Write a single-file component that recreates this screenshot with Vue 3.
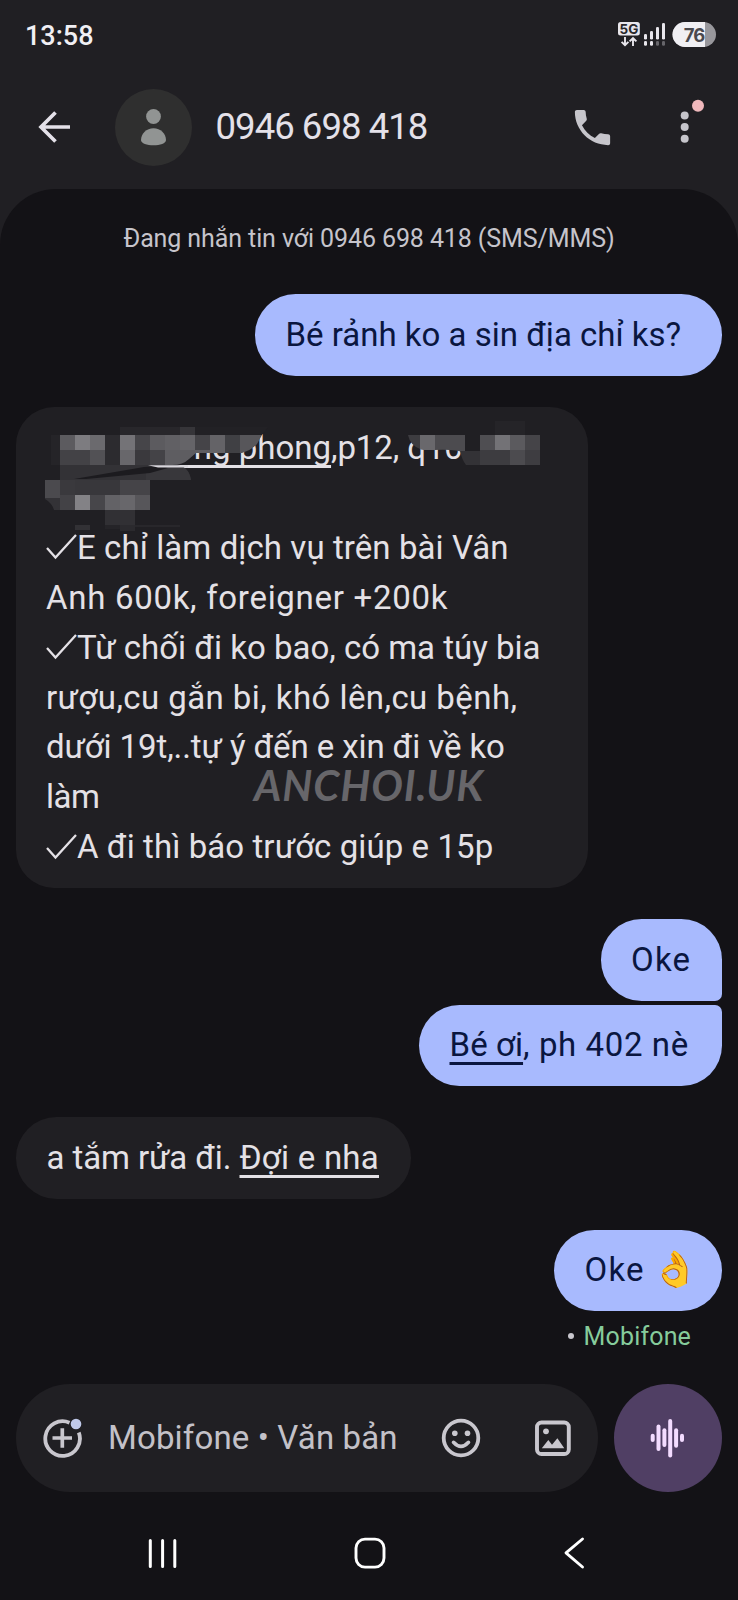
<script setup>
const lines = [
  { text: 'E chỉ làm dịch vụ trên bài Vân', check: true, cls: 'ls-1' },
  { text: 'Anh 600k, foreigner +200k', cls: 'ls-7' },
  { text: 'Từ chối đi ko bao, có ma túy bia', check: true, cls: 'ls-0' },
  { text: 'rượu,cu gắn bi, khó lên,cu bệnh,', cls: 'ls-4' },
  { text: 'dưới 19t,..tự ý đến e xin đi về ko', cls: 'ls-neg' },
  { text: 'làm', cls: 'ls-neg5' },
  { text: 'A đi thì báo trước giúp e 15p', check: true, cls: 'ls-1' },
]

// Pixelation tiles, relative to the bubble corner: x, y, width, height, colour.
const tilesTop = [
  [104, 20, 60, 8, '#28272b'], [164, 20, 15, 8, '#363539'], [179, 20, 73, 8, '#222125'], [35, 28, 9, 46, '#252428'],
  [44, 28, 15, 15, '#5c5b5f'], [59, 28, 15, 15, '#7d7c80'], [74, 28, 15, 15, '#6b6a6e'],
  [89, 28, 15, 30, '#2c2b2f'], [104, 28, 15, 15, '#747377'], [119, 28, 15, 15, '#464549'],
  [134, 28, 15, 15, '#5c5b5f'], [149, 28, 15, 15, '#616064'], [164, 28, 15, 15, '#656468'],
  [179, 28, 15, 18, '#454448'], [194, 28, 15, 18, '#646367'], [209, 28, 15, 18, '#404044'], [224, 28, 24, 18, '#57565a'],
  [44, 43, 30, 15, '#434246'], [74, 43, 15, 15, '#525155'], [104, 43, 15, 15, '#68676b'],
  [119, 43, 15, 15, '#3a393d'], [134, 43, 15, 15, '#444347'], [149, 43, 45, 15, '#5e5d61'],
]
const tilesLow = [
  [29, 73, 15, 18, '#4b4a4e'], [44, 73, 15, 15, '#3a393d'], [59, 73, 45, 15, '#38373b'], [104, 73, 30, 15, '#454448'],
  [44, 88, 15, 15, '#434246'], [59, 88, 15, 15, '#838286'], [74, 88, 15, 15, '#47464a'], [89, 88, 15, 15, '#636266'],
  [104, 88, 15, 15, '#68676b'], [119, 88, 15, 15, '#57565a'], [89, 103, 30, 15, '#313034'],
  [59, 118, 15, 5, '#323135'], [89, 118, 15, 4, '#252428'], [104, 118, 15, 6, '#2b2a2e'], [119, 118, 45, 2, '#28272b'],
]
const tilesRight = [
  [479, 14, 30, 14, '#252428'],
  [464, 28, 15, 15, '#4f4e52'], [479, 28, 15, 15, '#737276'], [494, 28, 15, 15, '#5b5a5e'], [509, 28, 15, 15, '#454448'],
  [464, 43, 30, 15, '#3d3c40'], [494, 43, 15, 15, '#4c4b4f'], [509, 43, 15, 15, '#3e3d41'],
]
</script>

<template>
  <div class="phone">
    <header class="top">
      <div class="status">
        <span class="time">13:58</span>
        <svg class="sys" width="100" height="28" viewBox="617 21 100 28">
          <rect x="618" y="22" width="21.8" height="13.6" rx="2.5" fill="#e8e6ec" />
          <text x="628.9" y="33.6" text-anchor="middle" class="g5">5G</text>
          <g stroke="#e8e6ec" stroke-width="1.9" fill="none">
            <path d="M625 37v8M621.6 41.8l3.4 3.4 3.4-3.4M633 46v-8M629.6 41.4l3.4-3.4 3.4 3.4" />
          </g>
          <g fill="#e8e6ec">
            <rect x="644" y="34" width="3" height="5.5" rx="1.3" />
            <rect x="650" y="31" width="3" height="8.5" rx="1.3" />
            <rect x="656" y="27" width="3" height="12.5" rx="1.3" />
            <rect x="662" y="23" width="3" height="16.5" rx="1.3" />
            <rect x="644" y="41" width="3" height="4.8" rx="1.3" />
            <rect x="650" y="41" width="3" height="4.8" rx="1.3" />
          </g>
          <g fill="#66656a">
            <rect x="656" y="41" width="3" height="4.8" rx="1.3" />
            <rect x="662" y="41" width="3" height="4.8" rx="1.3" />
          </g>
          <rect x="672.5" y="22" width="43.5" height="25" rx="12.5" fill="#98979c" />
          <path d="M685 22H705v25H685a12.5 12.5 0 0 1 0-25Z" fill="#f0eff3" />
          <text x="694" y="41.600" text-anchor="middle" class="pct">76</text>
        </svg>
      </div>
      <div class="bar">
        <svg class="back" width="36" height="36" viewBox="37 109 36 36" fill="none" stroke="#e4e1e9" stroke-width="3.7">
          <path d="M70 127H41M55.5 112.5 41 127l14.5 14.5" />
        </svg>
        <span class="avatar">
          <svg width="77" height="77" viewBox="115 88.5 77 77" fill="#919493">
            <circle cx="153.5" cy="116" r="7.4" />
            <path d="M141 139.500c0-6 5.500-11.700 12.500-11.700s12.500 5.700 12.500 11.700c0 3.500-6 5.300-12.500 5.300s-12.500-1.800-12.500-5.300Z" />
          </svg>
        </span>
        <h1 class="title">0946 698 418</h1>
        <svg class="call" width="47" height="47" viewBox="0 0 24 24" fill="#c6c5cb">
          <path d="M6.62 10.79c1.44 2.83 3.76 5.14 6.59 6.59l2.2-2.2c.27-.27.67-.36 1.02-.24 1.12.37 2.33.57 3.57.57.55 0 1 .45 1 1V20c0 .55-.45 1-1 1-9.39 0-17-7.61-17-17 0-.55.45-1 1-1h3.5c.55 0 1 .45 1 1 0 1.25.2 2.45.57 3.57.11.35.03.74-.25 1.02l-2.2 2.2z" />
        </svg>
        <svg class="more" width="30" height="48" viewBox="677 98 30 48" fill="#c6c5cb">
          <circle cx="684.7" cy="115.5" r="4" /><circle cx="684.7" cy="127" r="4" /><circle cx="684.7" cy="138.7" r="4" />
          <circle cx="698" cy="105.8" r="6" fill="#efb8bc" />
        </svg>
      </div>
    </header>

    <main class="sheet">
      <p class="info">Đang nhắn tin với 0946 698 418 (SMS/MMS)</p>

      <div class="msg out m1"><span class="ls-0">Bé rảnh ko a sin địa chỉ ks?</span></div>

      <div class="msg in long">
        <div class="line addr"><span class="u">ong phong</span><span class="ls-n">,p12, q10</span></div>
        <div class="line"></div>
        <div v-for="(l, i) in lines" :key="i" class="line">
          <svg v-if="l.check" class="tick" width="31" height="26" viewBox="0 0 31 26" fill="none" stroke="#e4e1e6" stroke-width="2.3">
            <path d="M1 14 9.500 23.500 30 1" />
          </svg>
          <span :class="l.cls">{{ l.text }}</span>
        </div>
        <svg class="mosaic" width="572" height="480" viewBox="0 0 572 480">
          <defs>
            <clipPath id="brush">
              <path d="M35 20H252L246 28 241 37Q236 43 226 46H180L173 52Q167 58 156 58H35Z" />
            </clipPath>
          </defs>
          <path d="M44 58H160Q173 60 175 73H29V92Q36 96 38 103H44Z" fill="#333236" />
          <path d="M158 58Q173 58 175 73H130V66L60 72 132 60Z" fill="#38373b" />
          <path d="M58 72 128 60 148 59 152 61 134 66 70 72Z" fill="#1c1b1f" />
          <path d="M132 58.2H172V60.5H142Z" fill="#d8d6dc" />
          <g clip-path="url(#brush)">
            <rect v-for="(t, i) in tilesTop" :key="i" :x="t[0]" :y="t[1]" :width="t[2]" :height="t[3]" :fill="t[4]" />
          </g>
          <rect v-for="(t, i) in tilesLow" :key="i" :x="t[0]" :y="t[1]" :width="t[2]" :height="t[3]" :fill="t[4]" />
          <rect x="388" y="20" width="60" height="8" fill="#201f23" />
          <path d="M392 28H404V42Q394 38 392 28Z" fill="#3d3c40" />
          <path d="M404 28H419V43H410Q405 43 404 42Z" fill="#69686c" />
          <path d="M419 28H449V46Q440 42 419 43Z" fill="#4c4b4f" />
          <path d="M444 44H464V58H450Q446 53 444 44Z" fill="#333236" />
          <rect v-for="(t, i) in tilesRight" :key="i" :x="t[0]" :y="t[1]" :width="t[2]" :height="t[3]" :fill="t[4]" />
        </svg>
        <span class="mark">ANCHOI.UK</span>
      </div>

      <div class="msg out m3"><span class="oke">Oke</span></div>
      <div class="msg out m4"><span class="ls-5"><span class="u ls-1">Bé ơi</span>, ph 402 nè</span></div>
      <div class="msg in m5"><span><span class="ls-neg">a tắm rửa đi. </span><span class="u ls-2">Đợi e nha</span></span></div>
      <div class="msg out m6"><span class="oke">Oke</span><span class="emoji">👌</span></div>
      <div class="meta"><i class="dot"></i><span>Mobifone</span></div>

      <div class="composer">
        <div class="field">
          <svg class="plus" width="42" height="42" viewBox="41 1417 42 42" fill="none" stroke="#c9c7ce">
            <path d="M69.5 1422.7A17.3 17.3 0 1 0 78.8 1432.5" stroke-width="3.8" />
            <path d="M62.3 1428.3V1447.7M52.5 1438H72" stroke-width="3.7" />
            <circle cx="76" cy="1424" r="5.3" fill="#c0c9ea" stroke="none" />
          </svg>
          <span class="ph">Mobifone • Văn bản</span>
          <svg class="smile" width="42" height="42" viewBox="439.5 1417 42 42" fill="none" stroke="#c9c7ce" stroke-width="3.8">
            <circle cx="460.5" cy="1438" r="17.3" />
            <path d="M453 1442.3Q460.5 1450.5 468 1442.3" stroke-width="3.6" stroke-linecap="round" />
            <g fill="#c9c7ce" stroke="none"><circle cx="454.3" cy="1433.3" r="2.8" /><circle cx="467" cy="1433.3" r="2.8" /></g>
          </svg>
          <svg class="pic" width="42" height="42" viewBox="532 1417 42 42" fill="none">
            <rect x="537" y="1422.5" width="31.8" height="31.5" rx="4.5" stroke="#c9c7ce" stroke-width="3.9" />
            <circle cx="546" cy="1431.3" r="2.9" fill="#c9c7ce" />
            <path d="M541.8 1448.3 548.3 1440 552 1444.8 557.4 1438.2 564.3 1448.3Z" fill="#c9c7ce" />
          </svg>
        </div>
        <button class="voice" type="button">
          <svg width="36" height="42" viewBox="650 1417 36 42" fill="#f3dcff">
            <rect x="650.7" y="1433.8" width="4" height="8.2" rx="2" />
            <rect x="656.5" y="1424.5" width="4" height="26.5" rx="2" />
            <rect x="662.4" y="1428.3" width="4" height="18.8" rx="2" />
            <rect x="668.2" y="1419" width="4" height="38.5" rx="2" />
            <rect x="674.1" y="1428.3" width="4" height="19.5" rx="2" />
            <rect x="680" y="1433.8" width="4" height="8.2" rx="2" />
          </svg>
        </button>
      </div>

      <nav class="nav">
        <svg width="30" height="32" viewBox="147 1537 30 32" stroke="#fff" stroke-width="3" stroke-linecap="round">
          <path d="M150.3 1540.5v26M162.6 1540.5v26M174.8 1540.5v26" />
        </svg>
        <svg width="34" height="34" viewBox="352 1536.5 34 34" fill="none" stroke="#fff" stroke-width="2.9">
          <rect x="355" y="1539.6" width="28" height="28" rx="9" />
        </svg>
        <svg width="24" height="34" viewBox="564 1536.5 24 34" fill="none" stroke="#fff" stroke-width="2.9" stroke-linecap="round" stroke-linejoin="round">
          <path d="M584.5 1539.5 568 1553.3 584.5 1567.5" />
        </svg>
      </nav>
    </main>
  </div>
</template>

<style>
html, body { background: #201f23; }
</style>

<style scoped>
.phone {
  width: 738px; height: 1600px; overflow: hidden; background: #201f23;
  font-family: Roboto, "Noto Sans", sans-serif; color: #e4e1e6;
  display: flex; flex-direction: column;
}
.top { height: 189px; flex: none; }
.status { height: 69px; padding: 0 21px 0 25px; display: flex; justify-content: space-between; }
.time { font-size: 27px; font-weight: 500; line-height: 32px; padding-top: 19.5px; letter-spacing: 0; color: #f0eff4; }
.sys { margin-top: 21px; }
.g5 { font: 700 13.5px Inter, sans-serif; fill: #29282c; }
.pct { font: 700 18.5px Inter, sans-serif; fill: #4a494e; letter-spacing: -1px; }
.bar { height: 116px; display: flex; align-items: center; padding-left: 37px; }
.avatar { width: 77px; height: 77px; border-radius: 50%; background: #2f2f2f; margin-left: 42px; display: flex; }
.title { margin: -1px 0 0 23.5px; width: 353.5px; font-size: 36.5px; font-weight: 400; letter-spacing: -.95px; white-space: nowrap; color: #e4e1e9; }
.more { margin: -10px 0 0 61px; }
.sheet { flex: 1; background: #131216; border-radius: 56px 56px 0 0; display: flex; flex-direction: column; padding: 0 16px; }
.info { margin: 33px 0 0; height: 34px; line-height: 34px; text-align: center; font-size: 25px; letter-spacing: -.1px; color: #c6c4cb; white-space: nowrap; }
.msg { box-sizing: border-box; font-size: 33px; line-height: 49.85px; border-radius: 40.7px; white-space: nowrap; height: 81.5px; padding: 15.8px 30.5px; }
.out { align-self: flex-end; background: #a8bafe; color: #0a1640; }
.in { align-self: flex-start; background: #201f23; }
.m1 { width: 467px; margin-top: 38px; }
.long { position: relative; width: 572px; height: 480.5px; margin-top: 31.5px; border-radius: 38px; padding: 16.3px 30px; }
.line { height: 49.85px; display: flex; }
.addr { padding-left: 129px; }
.tick { flex: none; margin-top: 11.5px; }
.u { text-decoration: underline; text-decoration-thickness: 2.5px; text-underline-offset: 5.5px; text-decoration-skip-ink: none; }
.ls-neg { letter-spacing: -.1px; }
.ls-neg5 { letter-spacing: -.5px; }
.ls-0 { letter-spacing: 0; }
.ls-1 { letter-spacing: .08px; }
.ls-2 { letter-spacing: .25px; }
.ls-4 { letter-spacing: .43px; }
.ls-5 { letter-spacing: .6px; }
.ls-7 { letter-spacing: .7px; }
.ls-n { letter-spacing: -.1px; }
.oke { letter-spacing: 1.2px; }
.mosaic { position: absolute; left: 0; top: 0; }
.mark { position: absolute; left: 238px; top: 353px; font: italic 700 42px/50px Lato, sans-serif; letter-spacing: .9px; color: #67666a; }
.m3 { width: 121.5px; margin-top: 31.5px; border-bottom-right-radius: 7px; }
.m4 { width: 303px; margin-top: 4px; border-top-right-radius: 7px; }
.m5 { width: 395px; margin-top: 31px; }
.m6 { width: 168px; margin-top: 31px; display: flex; }
.emoji { font-size: 35px; margin-left: 8px; width: 41px; transform: scaleX(1.15); text-align: center; flex: none; margin-right: -10px; }
.meta { align-self: flex-end; display: flex; align-items: center; gap: 10px; height: 30px; margin: 10px 31px 0 0; font-size: 25px; letter-spacing: .15px; color: #86cc9c; }
.dot { width: 6px; height: 6px; border-radius: 50%; background: #c9c7ce; }
.composer { display: flex; gap: 16px; margin-top: 32.5px; height: 108px; }
.field { box-sizing: border-box; width: 582px; flex: none; height: 108px; border-radius: 54px; background: #201f23; display: flex; align-items: center; padding-left: 25px; }
.ph { width: 332px; margin-left: 25px; font-size: 33px; letter-spacing: .15px; color: #c3c1c8; white-space: nowrap; }
.pic { margin-left: 50.5px; }
.smile { margin-left: -.5px; }
.voice { width: 108px; height: 108px; flex: none; padding: 0; border: 0; border-radius: 50%; background: #503f64; display: flex; align-items: center; justify-content: center; }
.voice svg { margin-left: -1px; }
.nav { display: flex; align-items: center; height: 34px; margin-top: 44px; padding-left: 131px; gap: 175.5px; }
</style>
